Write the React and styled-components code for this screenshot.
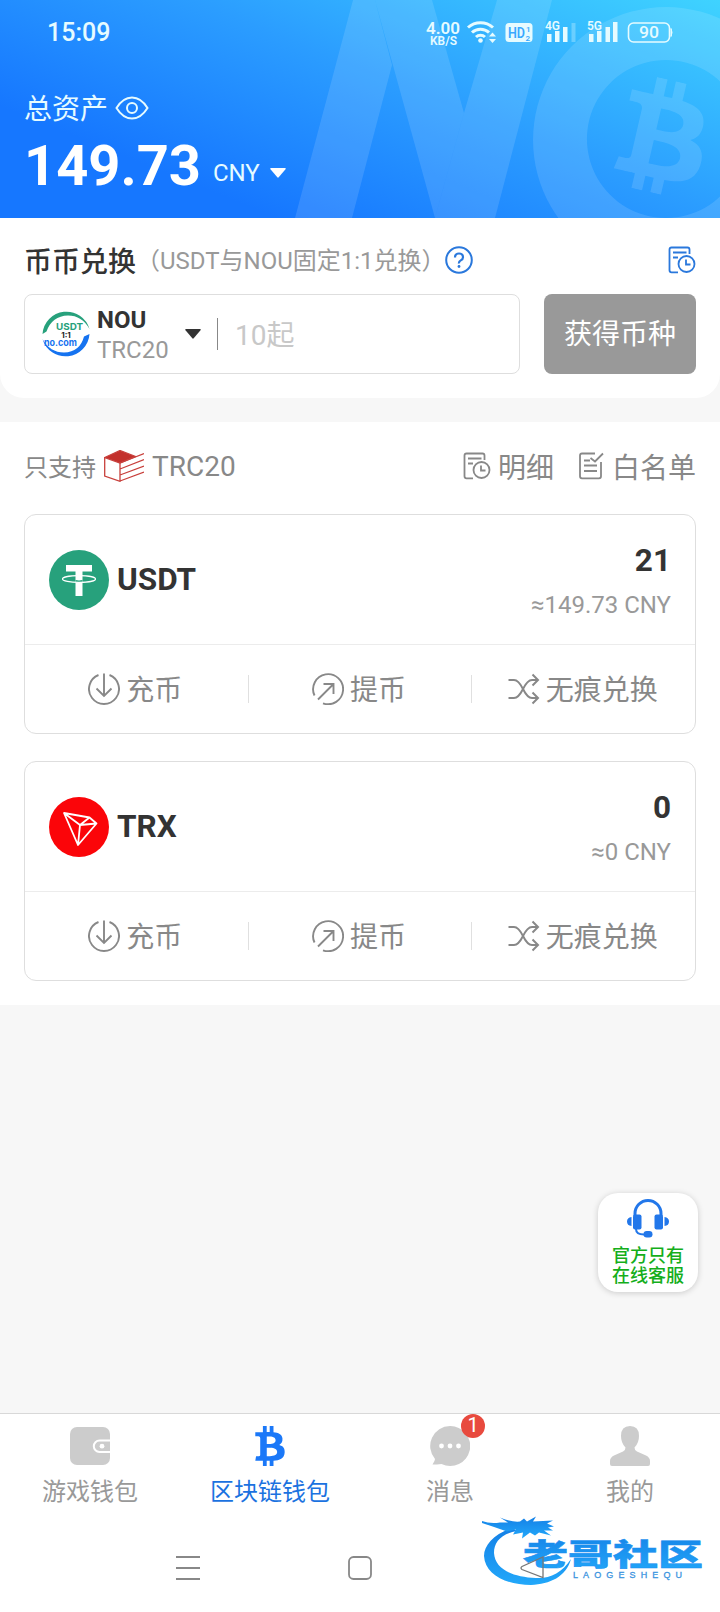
import React from "react";
import styled, { createGlobalStyle } from "styled-components";
import { FaBtc } from "react-icons/fa";

const assets = [
  { name: "USDT", amount: "21", value: "≈149.73 CNY", Logo: TetherLogo },
  { name: "TRX", amount: "0", value: "≈0 CNY", Logo: TronLogo },
];

const tabs = [
  { label: "游戏钱包", Icon: WalletIcon },
  { label: "区块链钱包", Icon: BitcoinIcon, active: true },
  { label: "消息", Icon: MessageIcon, badge: 1 },
  { label: "我的", Icon: UserIcon },
];

export default function App() {
  return (
    <Page>
      <GlobalStyle />
      <Header>
        <HeaderArt />
        <StatusBar>
          <Clock>15:09</Clock>
          <StatusIcons />
        </StatusBar>
        <TotalLabel>
          <span>总资产</span>
          <EyeIcon />
        </TotalLabel>
        <TotalRow>
          <Total>149.73</Total>
          <Currency>CNY</Currency>
          <Caret color="#fff" />
        </TotalRow>
      </Header>

      <Exchange>
        <ExchangeHead>
          <ExchangeTitle>币币兑换</ExchangeTitle>
          <ExchangeNote>（USDT与NOU固定1:1兑换）</ExchangeNote>
          <HelpIcon />
          <Spacer />
          <HistoryIcon color="#2a78dc" />
        </ExchangeHead>
        <ExchangeForm>
          <Field>
            <NouLogo />
            <Coin>
              <CoinName>NOU</CoinName>
              <CoinChain>TRC20</CoinChain>
            </Coin>
            <Caret color="#333" />
            <FieldLine />
            <Placeholder>10起</Placeholder>
          </Field>
          <Submit>获得币种</Submit>
        </ExchangeForm>
      </Exchange>

      <Panel>
        <PanelHead>
          <Support>只支持</Support>
          <CubeIcon />
          <Chain>TRC20</Chain>
          <Spacer />
          <HeadLink>
            <HistoryIcon color="#888" />
            明细
          </HeadLink>
          <HeadLink>
            <ListIcon />
            白名单
          </HeadLink>
        </PanelHead>
        {assets.map(({ name, amount, value, Logo }) => (
          <Card key={name}>
            <CardTop>
              <Logo />
              <CardName>{name}</CardName>
              <Spacer />
              <Balance>
                <Amount>{amount}</Amount>
                <Value>{value}</Value>
              </Balance>
            </CardTop>
            <Actions>
              <Action>
                <DepositIcon />
                <span>充币</span>
              </Action>
              <Action>
                <WithdrawIcon />
                <span>提币</span>
              </Action>
              <Action>
                <SwapIcon />
                <span>无痕兑换</span>
              </Action>
            </Actions>
          </Card>
        ))}
      </Panel>

      <Service>
        <HeadsetIcon />
        <span>官方只有</span>
        <span>在线客服</span>
      </Service>

      <TabBar>
        {tabs.map(({ label, Icon, active, badge }) => (
          <Tab key={label} $active={active}>
            <TabIcon>
              <Icon />
              {badge && <Badge>{badge}</Badge>}
            </TabIcon>
            {label}
          </Tab>
        ))}
      </TabBar>
      <SystemNav>
        <Watermark />
        <NavIcons />
      </SystemNav>
    </Page>
  );
}

function HeaderArt() {
  return (
    <Art width="720" height="218" viewBox="0 0 720 218">
      <g fill="#fff" fillOpacity="0.12">
        <path d="M353 0H375L392 65L352 218H295Z" />
        <path d="M375 0H432L464 113L435 218Z" />
        <path d="M497 0H552L495 218H435L464 113Z" />
        <path
          fillRule="evenodd"
          d="M666 7a133 133 0 1 0 .1 0ZM666 60a79 79 0 1 1-.1 0Z"
        />
      </g>
      <g transform="rotate(13 664 137)" opacity="0.12">
        <FaBtc x="607" y="80" size="114" color="#fff" />
      </g>
    </Art>
  );
}

function StatusIcons() {
  return (
    <svg width="250" height="30" viewBox="424 17 250 30" fill="#e6fbff">
      <g fontFamily="Roboto, sans-serif" fontWeight="600">
        <text x="426" y="33.5" fontSize="16" textLength="34" lengthAdjust="spacingAndGlyphs">4.00</text>
        <text x="430" y="44.500" fontSize="12.5" textLength="27" lengthAdjust="spacingAndGlyphs">KB/S</text>
        <text x="545" y="30" fontSize="12.500" textLength="15" lengthAdjust="spacingAndGlyphs">4G</text>
        <text x="587" y="30" fontSize="12.500" textLength="15" lengthAdjust="spacingAndGlyphs">5G</text>
      </g>
      <g fill="none" stroke="#e6fbff" strokeWidth="3">
        <path d="M468 27.5a18.5 18.5 0 0 1 25 0" />
        <path d="M472 32.5a12.5 12.5 0 0 1 17 0" />
        <path d="M476 37a6.5 6.5 0 0 1 9 0" />
      </g>
      <circle cx="480.500" cy="40.500" r="2.300" />
      <path d="M489 36.500l3.500-4 3.500 4zM489 39l3.500 4 3.500-4z" />
      <rect x="505.500" y="23" width="27" height="19" rx="3.500" />
      <g fill="#39a9ff" fontFamily="Roboto, sans-serif" fontWeight="600">
        <text x="508" y="38" fontSize="15" textLength="17" lengthAdjust="spacingAndGlyphs">HD</text>
        <text x="526" y="31.5" fontSize="8">1</text>
        <text x="525.500" y="40.500" fontSize="8">2</text>
      </g>
      <path d="M547 34h4.500v8H547zM555 31h4.500v11H555zM563 27h4.500v15H563z" />
      <path d="M571.500 23h4v19h-4z" opacity="0.3" />
      <path d="M589 34h4.500v8H589zM597 31h4.500v11H597zM605.500 27h4.500v15h-4.500zM613 22h4.500v20H613z" />
      <rect x="628.500" y="23" width="41" height="19" rx="5" fill="none" stroke="#e6fbff" strokeWidth="1.600" />
      <path d="M671 28.500q2 4 0 8z" stroke="#e6fbff" />
      <text x="639" y="38" fontFamily="Roboto, sans-serif" fontSize="16" fontWeight="500" textLength="20" lengthAdjust="spacingAndGlyphs">90</text>
    </svg>
  );
}

function EyeIcon() {
  return (
    <svg width="34" height="24" viewBox="0 0 34 24" fill="none" stroke="#e6fbff" strokeWidth="2">
      <path d="M1.500 12Q8 1.500 17 1.500T32.500 12Q26 22.500 17 22.500T1.500 12Z" />
      <circle cx="17" cy="12" r="5" />
    </svg>
  );
}

function Caret({ color }) {
  return (
    <svg width="16" height="10" viewBox="0 0 16 10" fill={color}>
      <path d="M1 0h14q1.500 0 .5 1.200L8.700 9.300q-.7.700-1.400 0L.5 1.200Q-.5 0 1 0Z" />
    </svg>
  );
}

function HelpIcon() {
  return (
    <svg width="28" height="28" viewBox="0 0 28 28" fill="none" stroke="#2a78dc" strokeWidth="2">
      <circle cx="14" cy="14" r="12.800" />
      <path d="M10 11.500q0-4 4-4t4 3.700q0 2-2.200 3.200T14 17.500" strokeWidth="2.200" />
      <circle cx="14" cy="20.500" r="1.400" fill="#2a78dc" stroke="none" />
    </svg>
  );
}

function HistoryIcon({ color }) {
  return (
    <svg width="28" height="28" viewBox="0 0 28 28" fill="none" stroke={color} strokeWidth="1.800">
      <path d="M10 26.300H3.500q-2 0-2-2V3.500q0-2 2-2h16q2 0 2 2V8" />
      <path d="M5 6.500h13.500M5 11.500h5" />
      <circle cx="18.500" cy="18" r="8" />
      <path d="M18 13.500v5h4.500" />
    </svg>
  );
}

function ListIcon() {
  return (
    <svg width="26" height="28" viewBox="0 0 26 28" fill="none" stroke="#888" strokeWidth="1.800">
      <path d="M16 1.500H3q-2 0-2 2v20.800q0 2 2 2h17q2 0 2-2V10" />
      <path d="M5 8.500h6M5 13.500h13M5 19h13M11.500 6l4.500 3.500L24 1.500" />
    </svg>
  );
}

function NouLogo() {
  return (
    <svg width="48" height="48" viewBox="0 0 48 48">
      <path d="M.5 24A24 24 0 0 1 47.500 19Q40 5.500 26 5.500Q10 6 4.500 21.500Z" fill="#27a17c" />
      <path d="M47.500 24A24 24 0 0 1 .5 29Q8 42.500 22 42.500Q38 42 42 26.500Z" fill="#1673f0" />
      <g fontFamily="Inter, sans-serif" fontWeight="700" textAnchor="middle">
        <text x="27.500" y="19.500" fontSize="9.500" fill="#27a17c" textLength="27" lengthAdjust="spacingAndGlyphs">USDT</text>
        <text x="24" y="27.500" fontSize="8" fill="#222">1:1</text>
        <text x="18.500" y="35.500" fontSize="9.500" fill="#1673f0" textLength="33" lengthAdjust="spacingAndGlyphs">no.com</text>
      </g>
    </svg>
  );
}

function CubeIcon() {
  return (
    <svg width="40" height="32" viewBox="0 0 40 32" fill="none" stroke="#c8403c" strokeWidth="1.300">
      <path d="M.7 7.500 16 .5 31.500 6.500 16 13Z" fill="#c3302c" />
      <path d="M.7 7.500V26L16 31.300V13M16 13 40 3.500M16 19 40 9.500M16 25 40 16M16 31 40 22" />
    </svg>
  );
}

function TetherLogo() {
  return (
    <svg width="60" height="60" viewBox="0 0 60 60">
      <circle cx="30" cy="30" r="30" fill="#27a17c" />
      <path d="M17 15h26v6.500H33.500V46h-7V21.500H17Z" fill="#fff" />
      <path d="M26.500 30q3.500.8 7 0v2.500h-7z" fill="#27a17c" />
      <ellipse cx="30" cy="29" rx="16.500" ry="3.400" fill="none" stroke="#fff" strokeWidth="1.200" />
    </svg>
  );
}

function TronLogo() {
  return (
    <svg width="60" height="60" viewBox="0 0 60 60">
      <circle cx="30" cy="30" r="30" fill="#fb0509" />
      <path
        d="M15 16 40.500 20.500 47.500 26.500 29 48ZM15 16 31 28 29 48M31 28 47.500 26.500M31 28 40.500 20.500"
        fill="none"
        stroke="#fff"
        strokeWidth="1.800"
        strokeLinejoin="round"
      />
    </svg>
  );
}

function DepositIcon() {
  return (
    <svg width="32" height="32" viewBox="0 0 32 32" fill="none" stroke="#888" strokeWidth="1.900">
      <path d="M10.500 2A15 15 0 1 0 21.500 2M16 .5V23M8.500 15.500 16 23l7.500-7.500" />
    </svg>
  );
}

function WithdrawIcon() {
  return (
    <svg width="32" height="32" viewBox="0 0 32 32" fill="none" stroke="#888" strokeWidth="1.900">
      <path d="M2.500 22.500A15 15 0 1 1 11 30.300M6 26.500 21.500 11M11.500 11H21.500V21" />
    </svg>
  );
}

function SwapIcon() {
  return (
    <svg width="32" height="32" viewBox="0 0 32 32" fill="none" stroke="#888" strokeWidth="2">
      <path d="M.5 7H6q4.500 0 9 9t9 9h6M.5 25H6q4.500 0 9-9t9-9h6" />
      <path d="M24.500 1.500 30 7l-5.500 5.500M24.500 19.500 30 25l-5.500 5.500" />
    </svg>
  );
}

function HeadsetIcon() {
  return (
    <svg width="42" height="39" viewBox="0 0 42 39" fill="#2277ea">
      <path d="M8 17V14.500a13 13 0 0 1 26 0V17" fill="none" stroke="#2277ea" strokeWidth="3" />
      <rect x="6" y="15.500" width="8.500" height="15" rx="2" />
      <rect x="27.500" y="15.500" width="8.500" height="15" rx="2" />
      <path d="M4.500 18v9Q0 26.500 0 22.500T4.500 18ZM37.500 18v9q4.500-.5 4.500-4.500T37.500 18Z" />
      <path d="M9 30q0 5.500 8 5.500" fill="none" stroke="#2277ea" strokeWidth="2" />
      <rect x="16.500" y="32" width="9" height="6.500" rx="3.250" />
    </svg>
  );
}

function WalletIcon() {
  return (
    <svg width="40" height="40" viewBox="0 0 40 40">
      <rect y="1" width="40" height="38" rx="7" fill="#ccc" />
      <path d="M40 14.500H29.500a5.700 5.700 0 0 0 0 11.400H40" fill="none" stroke="#fff" strokeWidth="2" />
      <circle cx="32" cy="20.200" r="2.400" fill="#fff" />
    </svg>
  );
}

function BitcoinIcon() {
  return <FaBtc size={40} color="#1b78f8" />;
}

function MessageIcon() {
  return (
    <svg width="40" height="40" viewBox="0 0 40 40">
      <path d="M20 0a20 20 0 1 1-8.500 38Q7 38.500 2.500 38.500 5 35 5 33A20 20 0 0 1 20 0Z" fill="#ccc" />
      <g fill="#fff">
        <circle cx="11.500" cy="20" r="2.400" />
        <circle cx="20" cy="20" r="2.400" />
        <circle cx="28.500" cy="20" r="2.400" />
      </g>
    </svg>
  );
}

function UserIcon() {
  return (
    <svg width="40" height="40" viewBox="0 0 40 40" fill="#ccc">
      <path d="M20 0q9 0 9 10 0 7-4.500 11.500 0 3 2.500 4l9 4q4 2 4 5.500v3q0 2-2 2H2q-2 0-2-2v-3q0-3.500 4-5.500l9-4q2.500-1 2.500-4Q11 17 11 10 11 0 20 0Z" />
    </svg>
  );
}

function Watermark() {
  return (
    <WatermarkArt width="226" height="78" viewBox="480 1514 226 78">
      <defs>
        <linearGradient id="wm" x1="0" y1="0" x2="0" y2="1">
          <stop offset="0" stopColor="#1580e6" />
          <stop offset="1" stopColor="#22a8fa" />
        </linearGradient>
      </defs>
      <g fill="url(#wm)">
        <path d="M512 1528C494 1534 484 1545 484 1556C485 1575 507 1585 531 1585C550 1584 566 1577 571 1559C562 1573 549 1579 536 1578C512 1577 495 1569 494 1553C494 1542 501 1534 517 1531Z" />
        <path d="M482 1521q8 3 18 1.500l8 0-8-5q12 5 20 4l4-3 3 3 9-5-3 5 20-1-6 3 7 3-6 1 5 3-9 0 7 5-12-3-4 3-5-3-8 6 1-6-10 2 3-5-9 2q-14-5-25-8.500Z" />
      </g>
      <text
        x="523"
        y="1565"
        fontFamily="'Noto Sans CJK SC', sans-serif"
        fontWeight="900"
        fontSize="30"
        fill="url(#wm)"
        stroke="#1b8ff0"
        strokeWidth=".5"
        textLength="180"
        lengthAdjust="spacingAndGlyphs"
      >
        老哥社区
      </text>
      <text
        x="573"
        y="1578"
        fontFamily="'Liberation Sans', sans-serif"
        fontWeight="400"
        fontSize="9"
        fill="#3a94e0"
        stroke="#3a94e0"
        strokeWidth=".3"
        textLength="109"
        lengthAdjust="spacing"
      >
        LAOGESHEQU
      </text>
    </WatermarkArt>
  );
}

function NavIcons() {
  return (
    <NavArt width="720" height="40" viewBox="0 1548 720 40" fill="none" stroke="#888" strokeWidth="1.800">
      <path d="M176 1557h24M176 1568h24M176 1579h24" />
      <rect x="349" y="1557" width="22" height="22" rx="4.500" />
      <path d="M543 1557v20.500L522 1569.500q-2-1.500 0-3Z" stroke="#777" strokeWidth="1.300" />
    </NavArt>
  );
}

const GlobalStyle = createGlobalStyle`
  * {
    box-sizing: border-box;
  }

  body {
    margin: 0;
    background: #f7f7f7;
  }

  svg {
    display: block;
    flex: none;
  }
`;

const Page = styled.div`
  position: relative;
  display: flex;
  flex-direction: column;
  width: 720px;
  height: 1612px;
  overflow: hidden;
  background: #f7f7f7;
  color: #888;
  font-family: Roboto, "Noto Sans CJK SC", sans-serif;
  font-weight: 400;
  white-space: nowrap;
`;

const Spacer = styled.div`
  flex: 1;
`;

const Header = styled.header`
  position: relative;
  height: 218px;
  color: #fff;
  background: linear-gradient(22deg, #1677ff 22%, #2b9dff 58%, #3fd3ff 100%);
`;

const Art = styled.svg`
  position: absolute;
  top: 0;
  left: 0;
`;

const StatusBar = styled.div`
  position: relative;
  display: flex;
  justify-content: space-between;
  align-items: center;
  height: 64px;
  padding: 0 46px 0 47px;
`;

const Clock = styled.div`
  padding-top: 1px;
  font-size: 25px;
  font-weight: 500;
  color: #e6fbff;
`;

const TotalLabel = styled.div`
  position: relative;
  display: flex;
  align-items: center;
  gap: 7px;
  height: 40px;
  margin-top: 24px;
  padding: 0 24px;
  font-size: 28px;
  line-height: 40px;
  color: #e6fbff;

  span {
    padding-top: 4px;
  }
`;

const TotalRow = styled.div`
  position: relative;
  display: flex;
  align-items: center;
  height: 76px;
  padding: 0 24px;

  svg {
    margin: 13px 0 0 10px;
  }
`;

const Total = styled.div`
  font-size: 56px;
  font-weight: 700;
  line-height: 72px;
`;

const Currency = styled.div`
  margin: 13px 0 0 12px;
  font-size: 24px;
  color: #e6fbff;
`;

const Exchange = styled.section`
  height: 180px;
  padding: 24px 24px 0;
  border-radius: 0 0 24px 24px;
  background: #fff;
`;

const ExchangeHead = styled.div`
  display: flex;
  align-items: center;
  height: 36px;
`;

const ExchangeTitle = styled.div`
  padding-bottom: 1px;
  font-size: 28px;
  font-weight: 500;
  color: #333;
`;

const ExchangeNote = styled.div`
  width: 309px;
  padding-bottom: 4px;
  font-size: 24px;
  color: #999;
`;

const ExchangeForm = styled.div`
  display: flex;
  gap: 24px;
  margin-top: 16px;
`;

const Field = styled.div`
  display: flex;
  align-items: center;
  width: 496px;
  height: 80px;
  padding-left: 17px;
  border: 1px solid #dedede;
  border-radius: 8px;
`;

const Coin = styled.div`
  width: 88px;
  margin-left: 7px;
  padding-top: 1px;
  font-size: 24px;
  line-height: 30px;
`;

const CoinName = styled.div`
  font-weight: 700;
  color: #333;
`;

const CoinChain = styled.div`
  color: #999;
`;

const FieldLine = styled.div`
  width: 1px;
  height: 32px;
  margin: 0 17px 0 16px;
  background: #888;
`;

const Placeholder = styled.div`
  padding-bottom: 2px;
  font-size: 28px;
  color: #c8c8c8;
`;

const Submit = styled.button`
  width: 152px;
  height: 80px;
  padding: 0 0 5px;
  border: 0;
  border-radius: 8px;
  background: #999;
  color: #fff;
  font: inherit;
  font-size: 28px;
`;

const Panel = styled.section`
  height: 583px;
  margin-top: 24px;
  padding: 0 24px;
  background: #fff;
`;

const PanelHead = styled.div`
  display: flex;
  align-items: center;
  height: 92px;
  padding-bottom: 4px;
`;

const Support = styled.div`
  width: 80px;
  padding-bottom: 1px;
  font-size: 24px;
`;

const Chain = styled.div`
  margin-left: 8px;
  font-size: 28px;
`;

const HeadLink = styled.div`
  display: flex;
  align-items: center;
  gap: 7px;
  margin-left: 25px;
  font-size: 28px;
`;

const Card = styled.article`
  height: 220px;
  border: 1px solid #dedede;
  border-radius: 12px;

  & + & {
    margin-top: 27px;
  }
`;

const CardTop = styled.div`
  display: flex;
  align-items: center;
  height: 130px;
  padding: 0 24px;
  border-bottom: 1px solid #ececec;
`;

const CardName = styled.div`
  margin-left: 8px;
  font-size: 31.5px;
  font-weight: 700;
  color: #333;
`;

const Balance = styled.div`
  padding-top: 6px;
  text-align: right;
`;

const Amount = styled.div`
  font-size: 31.5px;
  font-weight: 700;
  line-height: 44px;
  color: #333;
`;

const Value = styled.div`
  font-size: 24px;
  line-height: 44px;
  color: #999;
`;

const Actions = styled.div`
  display: flex;
  align-items: center;
  height: 87px;
`;

const Action = styled.div`
  display: flex;
  flex: 1;
  align-items: center;
  justify-content: center;
  gap: 6px;
  height: 28px;
  padding-right: 2px;
  font-size: 28px;

  span {
    padding-bottom: 1px;
  }

  & + & {
    border-left: 1px solid #e0e0e0;
  }
`;

const Service = styled.div`
  position: absolute;
  top: 1193px;
  right: 22px;
  display: flex;
  flex-direction: column;
  align-items: center;
  width: 100px;
  height: 99px;
  padding-top: 6px;
  border-radius: 20px;
  background: #fff;
  box-shadow: 0 1px 6px rgba(0, 0, 0, 0.18);
  font-size: 18px;
  font-weight: 500;
  line-height: 20px;
  color: #14ae1b;

  svg {
    margin-bottom: 8px;
  }
`;

const TabBar = styled.nav`
  display: flex;
  height: 103px;
  margin-top: auto;
  padding-top: 12px;
  border-top: 1px solid #d8d8d8;
  background: #fff;
`;

const Tab = styled.div`
  display: flex;
  flex: 1;
  flex-direction: column;
  align-items: center;
  font-size: 24px;
  line-height: 53px;
  color: ${({ $active }) => ($active ? "#1b72e0" : "#999")};
`;

const TabIcon = styled.div`
  position: relative;
`;

const Badge = styled.div`
  position: absolute;
  top: -12px;
  left: 31px;
  width: 24px;
  height: 24px;
  border-radius: 50%;
  background: #e84a3e;
  color: #fff;
  font-size: 20px;
  line-height: 23px;
  text-align: center;
`;

const SystemNav = styled.div`
  position: relative;
  height: 96px;
  padding-top: 32px;
  background: #fff;
`;

const WatermarkArt = styled.svg`
  position: absolute;
  top: -2px;
  left: 480px;
`;

const NavArt = styled.svg`
  position: relative;
`;
